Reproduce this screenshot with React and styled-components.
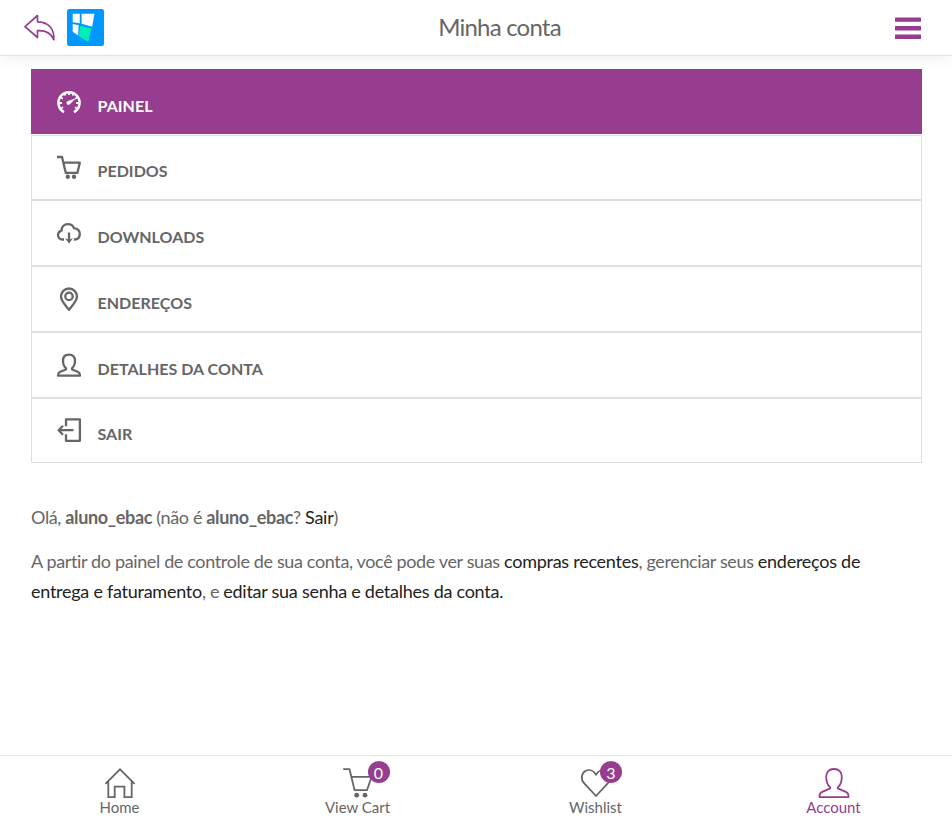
import React from 'react';
import styled, { createGlobalStyle } from 'styled-components';

const purple = '#963d8f';
const gray = '#666666';

const GlobalStyle = createGlobalStyle`
  * { box-sizing: border-box; }
  body { margin: 0; background: #fff; font-family: Lato, "Liberation Sans", sans-serif; color: ${gray}; }
  a { text-decoration: none; color: inherit; }
`;

const Page = styled.div`
  display: flex;
  flex-direction: column;
  height: 825px;
  overflow: hidden;
`;

const Header = styled.header`
  display: grid;
  grid-template-columns: 1fr auto 1fr;
  align-items: center;
  height: 56px;
  flex: none;
  padding: 0 31px 0 24px;
  border-bottom: 1px solid #e4e4e4;
  box-shadow: 0 2px 14px rgba(0, 0, 0, 0.07);
`;

const HeaderLeft = styled.div`
  display: flex;
  align-items: center;
  gap: 12px;
`;

const Title = styled.h1`
  margin: 0 0 2px 54px;
  font-size: 24px;
  font-weight: 400;
  line-height: 30px;
  letter-spacing: -0.8px;
  white-space: nowrap;
`;

const MenuButton = styled.button`
  justify-self: end;
  display: flex;
  width: 26px;
  height: 22px;
  margin-top: 1px;
  padding: 0;
  border: 0;
  background: none;
`;

const Content = styled.main`
  flex: 1;
  padding: 13px 30px 0 31px;
`;

const Menu = styled.nav`
  display: flex;
  flex-direction: column;
`;

const MenuItem = styled.a`
  display: flex;
  align-items: flex-start;
  gap: 16.5px;
  height: ${(p) => p.$height}px;
  padding: ${(p) => p.$top - 1}px 25px 0;
  border: 1px solid ${(p) => (p.$active ? purple : '#dfdfdf')};
  margin-bottom: ${(p) => (p.$active ? 1 : 0)}px;
  background: ${(p) => (p.$active ? purple : '#fff')};
  color: ${(p) => (p.$active ? '#fff' : gray)};
`;

const MenuLabel = styled.span`
  margin-top: 6px;
  font-size: 16px;
  line-height: 20px;
  font-weight: 700;
  letter-spacing: 0.03px;
  text-transform: uppercase;
`;

const Icon = styled.svg`
  display: block;
  flex: none;
  fill: none;
  stroke: currentColor;
  stroke-width: ${(p) => p.$stroke || 2.3};
  stroke-linejoin: round;
  overflow: visible;
`;

const Intro = styled.section`
  padding-top: 39px;
  font-size: 18px;
  line-height: 30px;
  letter-spacing: -0.36px;
`;

const Paragraph = styled.p`
  margin: 0 0 14px;
`;

const Link = styled.a`
  color: #222;
  letter-spacing: -0.26px;
`;

const BottomBar = styled.nav`
  display: grid;
  grid-template-columns: repeat(4, 1fr);
  height: 70px;
  flex: none;
  border-top: 1px solid #e4e4e4;
`;

const Tab = styled.a`
  display: flex;
  flex-direction: column;
  align-items: center;
  padding: 12px 0 0 1px;
  color: ${(p) => (p.$active ? purple : gray)};
`;

const TabIcon = styled.span`
  position: relative;
  width: 30px;
  height: 30px;
`;

const TabLabel = styled.span`
  margin-top: -1px;
  font-size: 15px;
  line-height: 20px;
`;

const Badge = styled.span`
  position: absolute;
  top: -7px;
  left: ${(p) => p.$left}px;
  width: 22px;
  height: 22px;
  border-radius: 50%;
  background: ${purple};
  color: #fff;
  font-size: 16px;
  line-height: 23px;
  text-align: center;
`;

const drawings = {
  gauge: (
    <>
      <path d="M7 22.1A10.6 10.6 0 1 1 17 22.1" strokeWidth="2.5" />
      <path d="M2 13h3M3.2 7.2l2.6 1.5M7 3l1.5 2.5M12 2v3M17 3l-1.5 2.5M20.8 7.2l-2.6 1.5M22 13h-3M3.6 18.5l2.5-1.3M20.4 18.5l-2.5-1.3" strokeWidth="1.8" />
      <path d="M18.8 8.2 11.2 10.9a2 2 0 1 0 1.9 3.2Z" fill="currentColor" stroke="none" />
    </>
  ),
  cart: (
    <>
      <path d="M0 2h5l3.8 15.9h11.6l2.4-10.2H6.6" />
      <circle cx="10.8" cy="21.7" r="2.2" fill="currentColor" stroke="none" />
      <circle cx="17" cy="21.7" r="2.2" fill="currentColor" stroke="none" />
    </>
  ),
  cloud: (
    <>
      <path d="M7 18.5H5.5C2.8 18.5 1 16.5 1 14c0-2.2 1.4-3.8 3.6-4.4C4.2 5.8 7.2 3.2 10.8 3.2c3 0 5.3 1.4 6.3 4.2 3.4-.2 5.7 2.2 5.7 5.4 0 3.4-2 5.7-5.3 5.7H17" />
      <path d="M12 11.5V20" />
      <path d="m8 17.3 4 5.2 4-5.2-3 1h-2Z" fill="currentColor" stroke="none" />
    </>
  ),
  pin: (
    <>
      <path d="M12 22.9C9 18.9 4 14 4 9.5a8 8 0 0 1 16 0c0 4.5-5 9.4-8 13.4Z" />
      <circle cx="12" cy="9.4" r="3.7" />
    </>
  ),
  user: (
    <path d="M12 1.6c-4 0-6 2.4-6 6 0 3.4 1 6 2.8 7.4.5.5.3 1.4-.5 1.7L2.8 19C1.4 19.7 1 20.7 1 22.7h22c0-2-.4-3-1.8-3.7l-5.5-2.3c-.8-.3-1-1.2-.5-1.7C17 13.6 18 11 18 7.6c0-3.6-2-6-6-6Z" />
  ),
  exit: <path d="M9 8.2V1.4h13.9v21.4H9V16.2M16.5 12.2H1.6M6 7.7 1.6 12.2 6 16.7" />,
};

const menuItems = [
  { label: 'Painel', icon: 'gauge', height: 65, top: 21, active: true },
  { label: 'Pedidos', icon: 'cart', height: 65, top: 20 },
  { label: 'Downloads', icon: 'cloud', height: 66, top: 21 },
  { label: 'Endereços', icon: 'pin', height: 66, top: 21 },
  { label: 'Detalhes da conta', icon: 'user', height: 66, top: 21 },
  { label: 'Sair', icon: 'exit', height: 65, top: 20 },
];

const tabs = [
  {
    label: 'Home',
    shape: <path d="m.4 15.8 14.6-14.5 14.6 14.5M3.3 13.2V29.1h6.4V18.7h9.7v10.4h7.3V13.2" strokeLinejoin="miter" />,
  },
  {
    label: 'View Cart',
    badge: 0,
    badgeLeft: 25,
    shape: (
      <>
        <path d="M.2 1.2h6.3L11.6 22.2h12.4l4.6-13.4H8.4" />
        <circle cx="13.7" cy="27.2" r="2.4" fill="currentColor" stroke="none" />
        <circle cx="22" cy="27.2" r="2.4" fill="currentColor" stroke="none" />
      </>
    ),
  },
  {
    label: 'Wishlist',
    badge: 3,
    badgeLeft: 19.5,
    shape: <path d="M15 28 3.1 15.2C-.7 11.2.4 4.9 4.8 2.8 8.5 1 12.5 2.6 15 6.8c2.5-4.2 6.5-5.8 10.2-4 4.4 2.1 5.5 8.4 1.7 12.4L15 28Z" />,
  },
  {
    label: 'Account',
    active: true,
    shape: (
      <path d="M15 1C10 1 7.2 3.9 7.2 8.8c0 4.4 1.5 8.4 3.8 10.4.5.5.4 1.2-.3 1.5l-7.5 3.2C.9 24.9.3 26.2.5 29.2h29c.2-3-.4-4.3-2.7-5.3l-7.5-3.2c-.7-.3-.8-1-.3-1.5 2.3-2 3.8-6 3.8-10.4C22.8 3.9 20 1 15 1Z" />
    ),
  },
];

export default function App() {
  return (
    <>
      <GlobalStyle />
      <Page>
        <Header>
          <HeaderLeft>
            <Icon width="31" height="27" viewBox="0 0 31 27" $stroke={1.7} color={purple}>
              <path d="M13.5 1.5 1 12.7l12.5 10.8v-6.9c8.5-.4 13.7 2 16.3 9.1C30.5 15 24.5 7.8 13.5 7.8Z" />
            </Icon>
            <svg width="37" height="37" viewBox="0 0 37 37">
              <rect width="37" height="37" rx="2.5" fill="#0097ff" />
              <path d="M5.7 4.7h7.1v9.5l-7.1-1ZM14.6 4.7h12.8l-2.2 13.1-10.6-3.1ZM5.7 15l6 1.3-.6 10.2-5.4-3.7Z" fill="#fff" />
              <path d="m13.2 16.7 11.2 2.5-3 13.6-9.6-5.6Z" fill="#00efb5" />
            </svg>
          </HeaderLeft>
          <Title>Minha conta</Title>
          <MenuButton aria-label="Menu">
            <svg width="26" height="22" viewBox="0 0 26 22" fill={purple}>
              <rect y=".4" width="26" height="4.4" rx=".5" />
              <rect y="9" width="26" height="4.4" rx=".5" />
              <rect y="17.6" width="26" height="4.4" rx=".5" />
            </svg>
          </MenuButton>
        </Header>
        <Content>
          <Menu>
            {menuItems.map((item) => (
              <MenuItem key={item.label} href="#" $height={item.height} $top={item.top} $active={item.active}>
                <Icon width="24" height="24" viewBox="0 0 24 24">{drawings[item.icon]}</Icon>
                <MenuLabel>{item.label}</MenuLabel>
              </MenuItem>
            ))}
          </Menu>
          <Intro>
            <Paragraph>
              Olá, <strong>aluno_ebac</strong> (não é <strong>aluno_ebac</strong>? <Link href="#">Sair</Link>)
            </Paragraph>
            <Paragraph>
              A partir do painel de controle de sua conta, você pode ver suas <Link href="#">compras recentes</Link>, gerenciar
              seus <Link href="#">endereços de entrega e faturamento</Link>, e{' '}
              <Link href="#">editar sua senha e detalhes da conta.</Link>
            </Paragraph>
          </Intro>
        </Content>
        <BottomBar>
          {tabs.map((tab) => (
            <Tab key={tab.label} href="#" $active={tab.active}>
              <TabIcon>
                <Icon width="30" height="30" viewBox="0 0 30 30" $stroke={1.8}>{tab.shape}</Icon>
                {tab.badge !== undefined && <Badge $left={tab.badgeLeft}>{tab.badge}</Badge>}
              </TabIcon>
              <TabLabel>{tab.label}</TabLabel>
            </Tab>
          ))}
        </BottomBar>
      </Page>
    </>
  );
}
